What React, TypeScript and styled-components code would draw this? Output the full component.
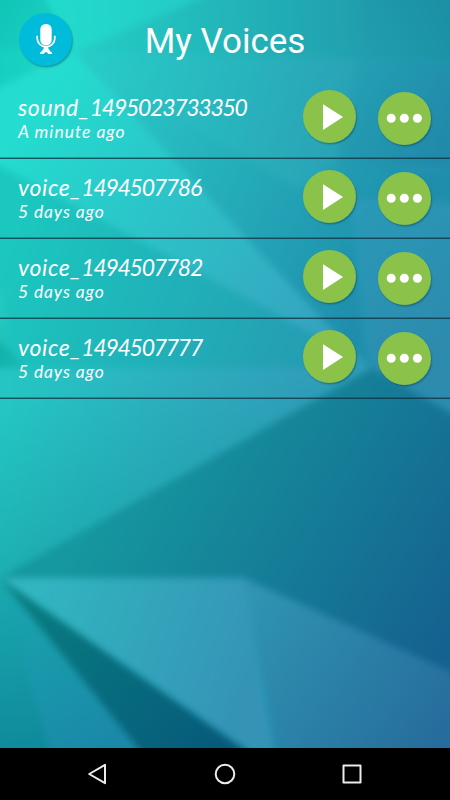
import React from "react";
import styled, { createGlobalStyle } from "styled-components";

const GlobalStyle = createGlobalStyle`
  * { box-sizing: border-box; }
  body { margin: 0; background: #000; }
`;

const Screen = styled.div`
  position: relative;
  width: 450px;
  height: 800px;
  display: flex;
  flex-direction: column;
  overflow: hidden;
  color: #fff;
  background: #000;
  font-family: Lato, "Liberation Sans", sans-serif;
`;

const WallpaperSvg = styled.svg`
  position: absolute;
  top: 0;
  left: 0;
  width: 450px;
  height: 748px;
`;

const Content = styled.main`
  position: relative;
  flex: 1;
`;

const Header = styled.header`
  height: 78px;
  display: grid;
  grid-template-columns: 72px 1fr 72px;
  align-items: start;
`;

const Title = styled.h1`
  margin: 20px 0 0;
  font: 400 35px/44px Roboto, sans-serif;
  letter-spacing: 0;
  text-align: center;
  white-space: nowrap;
`;

const RoundButton = styled.button<{ $color: string }>`
  display: block;
  width: 53px;
  height: 53px;
  padding: 0;
  border: 0;
  border-radius: 50%;
  background: ${(p) => p.$color};
  box-shadow: 1px 1.5px 1.5px rgba(0, 50, 70, 0.35);

  svg {
    display: block;
    width: 53px;
    height: 53px;
  }
`;

const RecordButton = styled(RoundButton)`
  margin: 13px 0 0 19px;
`;

const List = styled.ul`
  margin: 0;
  padding: 1px 0 0;
  list-style: none;
`;

const Row = styled.li`
  height: 80px;
  padding: 11px 19px 0 18px;
  display: flex;
  align-items: flex-start;
  border-bottom: 1px solid rgba(12, 42, 55, 0.72);
  box-shadow: inset 0 -1px 0 rgba(12, 42, 55, 0.32);
`;

const Info = styled.div`
  flex: 1;
  padding-top: 3px;
  font-style: italic;
  white-space: nowrap;
`;

const Name = styled.div`
  font-size: 23px;
  line-height: 28px;
`;

const Prefix = styled.span`
  letter-spacing: 0.65px;
`;

const Digits = styled.span`
  letter-spacing: -1.28px;
`;

const Age = styled.div<{ $spacing: number }>`
  font-size: 17.5px;
  line-height: 22px;
  letter-spacing: ${(p) => p.$spacing}px;
`;

const Actions = styled.div`
  display: flex;
  gap: 22px;
`;

const MoreButton = styled(RoundButton)`
  margin-top: 2px;
`;

const NavBar = styled.nav`
  position: relative;
  height: 52px;
  display: grid;
  grid-template-columns: 24px 24px 24px;
  justify-content: center;
  column-gap: 103px;
  align-items: center;
  background: #000;

  svg {
    display: block;
    fill: none;
    stroke: #ececec;
    stroke-width: 2;
    stroke-linejoin: round;
  }
`;

type Facet = {
  points: string;
  from: [number, number, string];
  to: [number, number, string];
};

const facets: Facet[] = [
  { points: "-30,-30 480,-30 480,780 -30,780", from: [80, 120, "#25d6cc"], to: [450, 240, "#218aad"] },
  { points: "-30,-30 33,-30 75,52 -30,50", from: [0, 0, "#0fc5b5"], to: [75, 50, "#21d3c8"] },
  { points: "-30,50 75,52 -30,108", from: [0, 70, "#15cfbf"], to: [75, 52, "#24d6cb"] },
  { points: "30,-30 290,-30 75,52", from: [45, 10, "#22dccd"], to: [190, 0, "#23cbc5"] },
  { points: "205,-3 280,-30 362,-30 356,70 140,56 75,52", from: [95, 45, "#23cbc4"], to: [400, 30, "#2099ab"] },
  { points: "75,52 360,58 336,170 290,186 130,92", from: [80, 55, "#27cec8"], to: [360, 120, "#29a0b5"] },
  { points: "362,-30 480,-30 480,64 358,58", from: [350, 50, "#219fb0"], to: [450, 0, "#1b8fa5"] },
  { points: "358,58 480,68 480,165 336,168", from: [340, 80, "#23a1b3"], to: [450, 140, "#2189aa"] },
  { points: "75,52 130,90 300,190 340,160 480,180 480,202 350,202 366,365 245,237", from: [110, 80, "#29c8c6"], to: [400, 230, "#1f8eac"] },
  { points: "352,198 480,204 480,430 372,372", from: [340, 230, "#2999b7"], to: [450, 330, "#2d8bae"] },
  { points: "-30,100 75,52 245,237 372,372 -30,162", from: [35, 110, "#24dccf"], to: [350, 340, "#379fbe"] },
  { points: "-30,150 310,332 372,372 -30,372", from: [0, 250, "#1bc8bf"], to: [320, 370, "#259bb2"] },
  { points: "-30,275 0,290 17,372 -30,372", from: [0, 310, "#25cac2"], to: [14, 360, "#1dbcb7"] },
  { points: "-30,325 0,343 28,370 -30,374", from: [0, 350, "#12b1a8"], to: [28, 368, "#1bbab5"] },
  { points: "-30,368 372,368 0,580 -30,590", from: [0, 400, "#23c6c2"], to: [310, 400, "#39a2c3"] },
  { points: "-30,368 372,368 0,580 -30,590", from: [60, 390, "rgba(20,145,155,0)"], to: [140, 580, "rgba(20,145,155,0.6)"] },
  { points: "0,578 372,368 480,430 480,690 245,579", from: [120, 470, "#15989f"], to: [440, 660, "#15618f"] },
  { points: "0,578 245,578 278,780 292,780", from: [30, 600, "#31b6c0"], to: [245, 680, "#3594b6"] },
  { points: "244,578 480,685 480,780 284,780", from: [250, 610, "#2f93b1"], to: [440, 740, "#266c9c"] },
  { points: "-30,578 2,578 60,780 -30,780", from: [0, 590, "#19a8ae"], to: [30, 740, "#108b9d"] },
  { points: "0,578 164,780 59,780", from: [10, 590, "#18a5ad"], to: [110, 748, "#1a88a8"] },
  { points: "0,578 288,780 164,780", from: [30, 600, "#087c80"], to: [210, 748, "#065b7b"] },
];

const Wallpaper = () => (
  <WallpaperSvg viewBox="0 0 450 748" aria-hidden="true">
    <defs>
      <filter id="soften" filterUnits="userSpaceOnUse" x="-30" y="-30" width="510" height="810" colorInterpolationFilters="sRGB">
        <feGaussianBlur stdDeviation="3.5" />
      </filter>
      {facets.map((f, i) => (
        <linearGradient key={i} id={`facet${i}`} gradientUnits="userSpaceOnUse" x1={f.from[0]} y1={f.from[1]} x2={f.to[0]} y2={f.to[1]}>
          <stop stopColor={f.from[2]} />
          <stop offset="1" stopColor={f.to[2]} />
        </linearGradient>
      ))}
    </defs>
    <g filter="url(#soften)">
      {facets.map((f, i) => (
        <polygon key={i} points={f.points} fill={`url(#facet${i})`} />
      ))}
    </g>
  </WallpaperSvg>
);

const MicIcon = () => (
  <svg viewBox="0 0 53 53">
    <rect x="21.300" y="11" width="11.400" height="21.300" rx="5.200" fill="#fff" />
    <path d="M18.200 22.800v2.700a8.800 8.200 0 0 0 17.600 0v-2.700" fill="none" stroke="#fff" strokeWidth="1.700" />
    <path d="M24.900 33.500h4.200c.1 3 1.500 4.500 4 6.200V41h-3.500L27 38.700 24.400 41h-3.500v-1.300c2.500-1.700 3.900-3.200 4-6.200z" fill="#fff" />
  </svg>
);

const PlayIcon = () => (
  <svg viewBox="0 0 53 53">
    <path d="M20 14.200 40 27 20 40z" fill="#fff" />
  </svg>
);

const DotsIcon = () => (
  <svg viewBox="0 0 53 53">
    {[13.2, 26.3, 39.4].map((x) => (
      <circle key={x} cx={x} cy="26.200" r="4.500" fill="#fff" />
    ))}
  </svg>
);

const recordings = [
  { prefix: "sound_", digits: "1495023733350", age: "A minute ago", ageSpacing: 1.0 },
  { prefix: "voice_", digits: "1494507786", age: "5 days ago", ageSpacing: 0.85 },
  { prefix: "voice_", digits: "1494507782", age: "5 days ago", ageSpacing: 0.85 },
  { prefix: "voice_", digits: "1494507777", age: "5 days ago", ageSpacing: 0.85 },
];

export default function App() {
  return (
    <Screen>
      <GlobalStyle />
      <Wallpaper />
      <Content>
        <Header>
          <RecordButton $color="#00bcda" aria-label="Record">
            <MicIcon />
          </RecordButton>
          <Title>My Voices</Title>
        </Header>
        <List>
          {recordings.map((r) => (
            <Row key={r.digits}>
              <Info>
                <Name>
                  <Prefix>{r.prefix}</Prefix>
                  <Digits>{r.digits}</Digits>
                </Name>
                <Age $spacing={r.ageSpacing}>{r.age}</Age>
              </Info>
              <Actions>
                <RoundButton $color="#8bc34a" aria-label="Play">
                  <PlayIcon />
                </RoundButton>
                <MoreButton $color="#8bc34a" aria-label="More options">
                  <DotsIcon />
                </MoreButton>
              </Actions>
            </Row>
          ))}
        </List>
      </Content>
      <NavBar>
        <svg width="24" height="24" viewBox="0 0 24 24">
          <path d="M19 2.800v18.400L3.200 12z" />
        </svg>
        <svg width="24" height="24" viewBox="0 0 24 24">
          <circle cx="12" cy="12" r="9.300" />
        </svg>
        <svg width="24" height="24" viewBox="0 0 24 24">
          <rect x="3.500" y="3.500" width="17" height="17" />
        </svg>
      </NavBar>
    </Screen>
  );
}
